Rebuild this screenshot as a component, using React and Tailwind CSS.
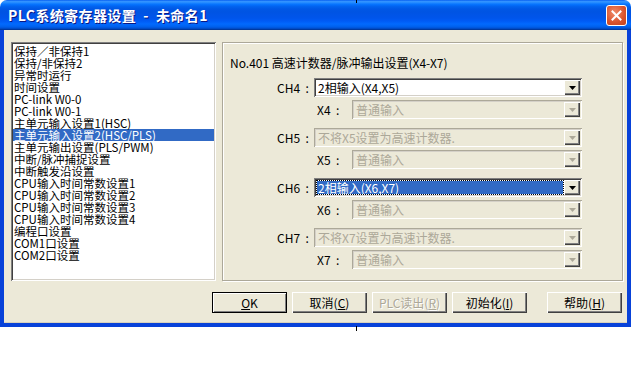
import React from 'react';

const sunken =
  'shadow-[inset_1px_1px_0_#808080,inset_-1px_-1px_0_#ffffff,inset_2px_2px_0_#404040,inset_-2px_-2px_0_#d4d0c8]';
const sunkenOff =
  'shadow-[inset_1px_1px_0_#aca899,inset_-1px_-1px_0_#ffffff,inset_2px_2px_0_#d4d0c8,inset_-2px_-2px_0_#ece9d8]';
const raised =
  'shadow-[inset_1px_1px_0_#ffffff,inset_-1px_-1px_0_#404040,inset_-2px_-2px_0_#808080]';

const listItems = [
  '保持／非保持1',
  '保持/非保持2',
  '异常时运行',
  '时间设置',
  'PC-link W0-0',
  'PC-link W0-1',
  '主单元输入设置1(HSC)',
  '主单元输入设置2(HSC/PLS)',
  '主单元输出设置(PLS/PWM)',
  '中断/脉冲捕捉设置',
  '中断触发沿设置',
  'CPU输入时间常数设置1',
  'CPU输入时间常数设置2',
  'CPU输入时间常数设置3',
  'CPU输入时间常数设置4',
  '编程口设置',
  'COM1口设置',
  'COM2口设置',
];

const rows = [
  { ch: 'CH4', chText: '2相输入(X4,X5)', chOn: true, x: 'X4' },
  { ch: 'CH5', chText: '不将X5设置为高速计数器.', chOn: false, x: 'X5' },
  { ch: 'CH6', chText: '2相输入(X6,X7)', chOn: true, focus: true, x: 'X6' },
  { ch: 'CH7', chText: '不将X7设置为高速计数器.', chOn: false, x: 'X7' },
];

const Arrow = ({ on }) => (
  <div className={`absolute right-[2px] top-[2px] w-[16px] h-[15px] bg-[#ece9d8] flex items-center justify-center ${raised}`}>
    <svg width="7" height="4" viewBox="0 0 7 4">
      <path d="M0 0h7L3.5 4z" fill={on ? '#000000' : '#aca899'} />
    </svg>
  </div>
);

const Combo = ({ text, on, focus, width }) => (
  <div className={`relative h-[19px] ${width} ${on ? `bg-white ${sunken}` : `bg-[#ece9d8] ${sunkenOff}`}`}>
    {focus ? (
      <div className="absolute left-[3px] top-[3px] right-[19px] bottom-[3px] bg-[#316ac5] outline-1 outline-dotted outline-[#000] text-white text-[12px] leading-[13px] pl-[1px] whitespace-nowrap">
        {text}
      </div>
    ) : (
      <div className={`absolute left-[4px] top-[3px] text-[12px] leading-[13px] whitespace-nowrap ${on ? 'text-black' : 'text-[#aca899]'}`}>
        {text}
      </div>
    )}
    <Arrow on={on} />
  </div>
);

const Btn = ({ children, def, off, className = '' }) => (
  <div
    className={`h-[21px] w-[75px] bg-[#ece9d8] flex items-center justify-center text-[12px] ${
      def ? 'border border-black shadow-[inset_1px_1px_0_#ffffff,inset_-1px_-1px_0_#808080]' : raised
    } ${off ? 'text-[#aca899] [text-shadow:1px_1px_0_#ffffff]' : 'text-black'} ${className}`}
  >
    {children}
  </div>
);

const App = () => {
  return (
    <div className="relative w-[633px] h-[384px] bg-white overflow-hidden font-['Noto_Sans_CJK_SC','Liberation_Sans',sans-serif]">
      <div className="w-[631px] flex flex-col">
        {/* title bar */}
        <div className="h-[30px] rounded-t-[7px] flex items-center pl-[8px] pr-[4px] bg-[linear-gradient(to_bottom,#0058ee_0%,#3593ff_4%,#288eff_8%,#127dff_12%,#036ffc_16%,#0262ee_22%,#0057e5_30%,#0054e3_40%,#0055eb_60%,#005bf5_70%,#026afe_80%,#0062ef_88%,#0052d6_94%,#0040ab_97%,#003092_100%)]">
          <span className="text-white font-bold text-[14px] leading-[16px] tracking-[0.4px] whitespace-pre [text-shadow:1px_1px_0_#0a1883]">
            {'PLC系统寄存器设置  -  未命名1'}
          </span>
          <div className="ml-auto w-[21px] h-[21px] rounded-[3px] border border-white bg-[radial-gradient(circle_at_40%_35%,#f08c6a,#d9522c_60%,#c0431f)] flex items-center justify-center">
            <svg width="11" height="11" viewBox="0 0 11 11">
              <path d="M1.5 1.5l8 8M9.5 1.5l-8 8" stroke="#fff" strokeWidth="2" strokeLinecap="square" />
            </svg>
          </div>
        </div>

        {/* body */}
        <div className="h-[297px] bg-[#ece9d8] border-x-[4px] border-b-[4px] border-[#0842d9] shadow-[inset_0_-1px_0_#d8d2bd]">
          <div className="flex pt-[12px] pl-[7px] gap-[6px]">
            {/* list */}
            <div className={`w-[205px] h-[239px] bg-white p-[2px] ${sunken}`}>
              <div className="pt-[1px]">
                {listItems.map((t, i) => (
                  <div
                    key={t}
                    className={`h-[12px] leading-[12px] text-[11.5px] pl-[1px] whitespace-nowrap ${
                      i === 7 ? 'bg-[#316ac5] text-white' : 'text-black'
                    }`}
                  >
                    {t}
                  </div>
                ))}
              </div>
            </div>

            {/* settings group */}
            <div className="w-[401px] h-[239px] border border-[#aca899] shadow-[inset_1px_1px_0_#ffffff,1px_1px_0_#ffffff]">
              <div className="pt-[13px] pl-[7px] text-[12px] leading-[14px] text-black whitespace-nowrap">
                No.401 高速计数器/脉冲输出设置(X4-X7)
              </div>
              <div className="mt-[8px] flex flex-col">
                {rows.map((r, i) => (
                  <div key={r.ch} className={`flex flex-col gap-[3px] ${i > 0 ? 'mt-[9px]' : ''}`}>
                    <div className="flex items-center pl-[54px]">
                      <span className="w-[37px] text-[12px] text-black whitespace-pre">{r.ch + '  :'}</span>
                      <Combo text={r.chText} on={r.chOn} focus={r.focus} width="w-[268px]" />
                    </div>
                    <div className="flex items-center pl-[94px]">
                      <span className="w-[35px] text-[12px] text-black whitespace-pre">{r.x + '  :'}</span>
                      <Combo text="普通输入" on={false} width="w-[230px]" />
                    </div>
                  </div>
                ))}
              </div>
            </div>
          </div>

          {/* buttons */}
          <div className="flex mt-[11px] pl-[208px] gap-[5px]">
            <Btn def>
              <span className="underline">O</span>K
            </Btn>
            <Btn>
              取消(<span className="underline">C</span>)
            </Btn>
            <Btn off>
              PLC读出(<span className="underline">R</span>)
            </Btn>
            <Btn>
              初始化(<span className="underline">I</span>)
            </Btn>
            <Btn className="ml-[15px]">
              帮助(<span className="underline">H</span>)
            </Btn>
          </div>
        </div>
      </div>

      {/* stray ticks in the capture */}
      <div className="absolute left-[356px] top-0 w-px h-[3px] bg-black" />
      <div className="absolute left-[356px] top-[326px] w-px h-[5px] bg-black" />
    </div>
  );
};

export default App;
